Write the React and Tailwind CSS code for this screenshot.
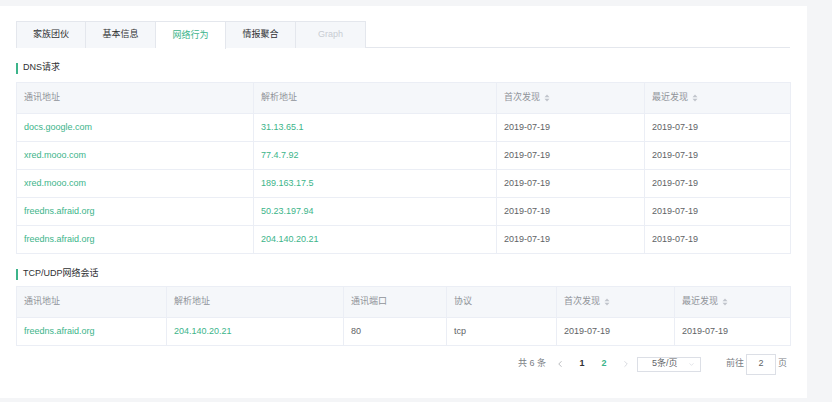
import { ChevronLeft, ChevronRight, ChevronDown } from 'lucide-react';

const dnsRows = [
  ['docs.google.com', '31.13.65.1'],
  ['xred.mooo.com', '77.4.7.92'],
  ['xred.mooo.com', '189.163.17.5'],
  ['freedns.afraid.org', '50.23.197.94'],
  ['freedns.afraid.org', '204.140.20.21'],
];

const tabs = ['家族团伙', '基本信息', '网络行为', '情报聚合', 'Graph'];

function SortIcon() {
  return (
    <svg width="6" height="8" viewBox="0 0 6 8" className="ml-[4px] inline-block">
      <path d="M3 0.5 L5.5 3.3 H0.5 Z" fill="#c0c4cc" />
      <path d="M3 7.5 L5.5 4.7 H0.5 Z" fill="#c0c4cc" />
    </svg>
  );
}

function SectionTitle({ children }) {
  return (
    <div className="flex items-center h-[12px]">
      <div className="w-[2px] h-[11px] bg-[#3cb48a]" />
      <span className="ml-[5px] text-[9px] text-[#303133]">{children}</span>
    </div>
  );
}

function HeadCell({ children, sort }) {
  return (
    <th className="h-[31px] border border-[#ebeef5] bg-[#f5f7fa] px-[7px] text-left font-normal text-[9px] text-[#909399]">
      <span className="inline-flex items-center">
        {children}
        {sort && <SortIcon />}
      </span>
    </th>
  );
}

function Cell({ children, green }) {
  return (
    <td
      className={`h-[28px] border border-[#ebeef5] px-[7px] text-[9px] ${
        green ? 'text-[#3cb48a]' : 'text-[#606266]'
      }`}
    >
      {children}
    </td>
  );
}

export default function App() {
  return (
    <div
      className="w-[832px] h-[402px] bg-[#f4f5f7] pt-[6px] overflow-hidden"
      style={{ fontFamily: '"Liberation Sans", "Noto Sans CJK SC", sans-serif' }}
    >
      <div className="w-[807px] h-[392px] bg-white pt-[15px] pl-[16px] pr-[17px]">
        {/* Tabs */}
        <div className="flex h-[27px] border-b border-[#e4e7ed]">
          {tabs.map((t, i) => {
            const active = i === 2;
            const disabled = i === 4;
            return (
              <div
                key={t}
                className={`w-[70px] flex items-center justify-center text-[9px] border-t border-r border-[#e4e7ed] ${
                  i === 0 ? 'border-l' : ''
                } ${
                  active
                    ? 'bg-white text-[#3cb48a] h-[28px] -mb-[1px]'
                    : 'bg-[#f5f7fa] h-[27px] ' + (disabled ? 'text-[#c8ccd3]' : 'text-[#303133]')
                }`}
              >
                {t}
              </div>
            );
          })}
        </div>

        {/* DNS */}
        <div className="mt-[14px]">
          <SectionTitle>DNS请求</SectionTitle>
        </div>
        <table className="mt-[8px] w-[774px] table-fixed border-collapse">
          <colgroup>
            <col className="w-[237px]" />
            <col className="w-[243px]" />
            <col className="w-[148px]" />
            <col className="w-[146px]" />
          </colgroup>
          <thead>
            <tr>
              <HeadCell>通讯地址</HeadCell>
              <HeadCell>解析地址</HeadCell>
              <HeadCell sort>首次发现</HeadCell>
              <HeadCell sort>最近发现</HeadCell>
            </tr>
          </thead>
          <tbody>
            {dnsRows.map(([host, ip], i) => (
              <tr key={i}>
                <Cell green>{host}</Cell>
                <Cell green>{ip}</Cell>
                <Cell>2019-07-19</Cell>
                <Cell>2019-07-19</Cell>
              </tr>
            ))}
          </tbody>
        </table>

        {/* TCP/UDP */}
        <div className="mt-[14px]">
          <SectionTitle>TCP/UDP网络会话</SectionTitle>
        </div>
        <table className="mt-[6px] w-[774px] table-fixed border-collapse">
          <colgroup>
            <col className="w-[150px]" />
            <col className="w-[177px]" />
            <col className="w-[103px]" />
            <col className="w-[110px]" />
            <col className="w-[118px]" />
            <col className="w-[116px]" />
          </colgroup>
          <thead>
            <tr>
              <HeadCell>通讯地址</HeadCell>
              <HeadCell>解析地址</HeadCell>
              <HeadCell>通讯端口</HeadCell>
              <HeadCell>协议</HeadCell>
              <HeadCell sort>首次发现</HeadCell>
              <HeadCell sort>最近发现</HeadCell>
            </tr>
          </thead>
          <tbody>
            <tr>
              <Cell green>freedns.afraid.org</Cell>
              <Cell green>204.140.20.21</Cell>
              <Cell>80</Cell>
              <Cell>tcp</Cell>
              <Cell>2019-07-19</Cell>
              <Cell>2019-07-19</Cell>
            </tr>
          </tbody>
        </table>

        {/* Pagination */}
        <div className="mt-[8px] flex items-center justify-end h-[20px] text-[9px] text-[#606266] pr-[3px]">
          <span className="text-[#7a7e85]">共 6 条</span>
          <div className="ml-[3px] w-[22px] flex justify-center text-[#909399]">
            <ChevronLeft size={10} strokeWidth={1.5} />
          </div>
          <div className="w-[22px] text-center font-bold text-[#303133]">1</div>
          <div className="w-[22px] text-center font-bold text-[#3cb48a]">2</div>
          <div className="w-[22px] flex justify-center text-[#c0c4cc]">
            <ChevronRight size={10} strokeWidth={1.5} />
          </div>
          <div className="w-[64px] h-[15px] border border-[#dcdfe6] flex items-center pl-[14px] pr-[5px]">
            <span className="flex-1 text-[#606266]">5条/页</span>
            <ChevronDown size={7} strokeWidth={1.5} className="text-[#c0c4cc]" />
          </div>
          <span className="ml-[25px] text-[#7a7e85]">前往</span>
          <div className="ml-[2px] w-[30px] h-[21px] border border-[#dcdfe6] flex items-center justify-center text-[#606266]">
            2
          </div>
          <span className="ml-[2px] text-[#7a7e85]">页</span>
        </div>
      </div>
    </div>
  );
}
